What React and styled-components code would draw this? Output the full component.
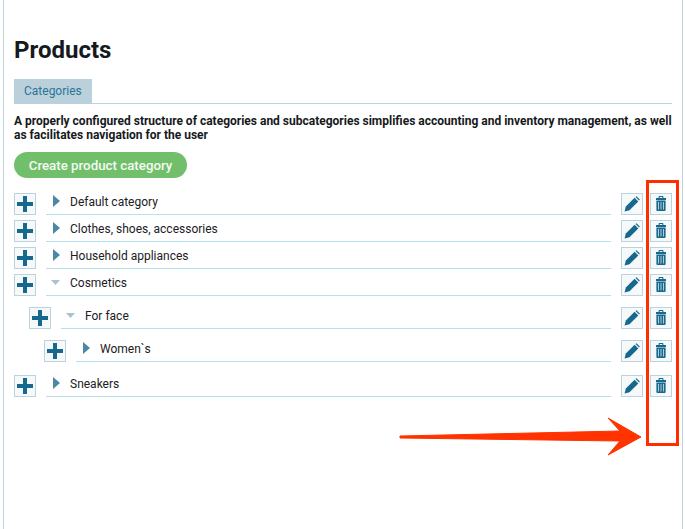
import React from "react";
import styled, { createGlobalStyle } from "styled-components";

const Global = createGlobalStyle`
  html, body { margin: 0; padding: 0; background: #fff; }
  body { font-family: Roboto, "Liberation Sans", sans-serif; overflow: hidden; }
`;

const Panel = styled.main`
  position: relative;
  box-sizing: border-box;
  width: 680px;
  height: 529px;
  margin-left: 3px;
  border-left: 1px solid #bcd2dc;
  border-right: 1px solid #bcd2dc;
  padding: 36px 10px 0 10px;
`;
const Title = styled.h1`
  margin: 0;
  font-size: 24px;
  line-height: 28px;
  font-weight: 700;
  color: #141a1e;
`;
const Tabs = styled.div`
  display: flex;
  margin-top: 15px;
  border-bottom: 1px solid #bcd2dc;
`;
const Tab = styled.div`
  height: 24px;
  line-height: 24px;
  padding: 0 10px;
  font-size: 12px;
  color: #2b7596;
  background: #bad1dc;
`;
const Description = styled.p`
  margin: 10px 0 0;
  font-size: 12px;
  line-height: 14px;
  font-weight: 700;
  color: #16191c;
`;
const CreateButton = styled.button`
  display: block;
  margin-top: 10px;
  width: 173px;
  height: 26px;
  border: 0;
  border-radius: 13px;
  padding: 0;
  background: #72bf6b;
  color: #f4faf3;
  font: 500 13.3px Roboto, sans-serif;
`;
const Tree = styled.div`
  margin-top: 15px;
`;
const Row = styled.div`
  display: flex;
  align-items: flex-start;
  height: 22px;
  margin-bottom: 5px;
`;
const Children = styled.div`
  padding: 6px 0 4px 15px;
`;
const IconButton = styled.span`
  box-sizing: border-box;
  flex: none;
  display: flex;
  align-items: center;
  justify-content: center;
  width: 22px;
  height: 22px;
  border: 1px solid #bcd2dc;
  background: #f5f9fa;
  color: #17688d;
`;
const Label = styled.div`
  box-sizing: border-box;
  flex: 1;
  display: flex;
  align-items: center;
  height: 22px;
  margin: 0 10px;
  border-bottom: 1px solid #b5e2f2;
  font-size: 12px;
  color: #1c2024;
  padding-bottom: 3px;
`;
const CaretSlot = styled.span`
  flex: none;
  display: flex;
  align-items: center;
  justify-content: flex-start;
  box-sizing: border-box;
  width: 24px;
  padding-left: ${(p) => (p.$open ? 5 : 6)}px;
  margin-bottom: 2px;
`;
const Actions = styled.div`
  display: flex;
  gap: 7px;
`;
const TrashIcon = styled.svg`
  margin-bottom: 2px;
`;
const Annotation = styled.svg`
  position: absolute;
  left: -4px;
  top: 0;
  width: 685px;
  height: 529px;
  pointer-events: none;
`;

const Plus = () => (
  <svg width="18" height="18" viewBox="0 0 18 18" fill="currentColor">
    <path d="M7 1h4v6h6v4h-6v6H7v-6H1V7h6z" />
  </svg>
);
const Pencil = () => (
  <svg width="16" height="16" viewBox="0 0 16 16" fill="currentColor">
    <path d="M0.6 15.4l1.2-4.9L10.6 1.7l3.7 3.7-8.8 8.8z" />
    <path d="M11.5 0.9l1-0.7 3.3 3.3-0.7 1z" />
  </svg>
);
const Trash = () => (
  <TrashIcon width="10" height="15" viewBox="0 0 10 15" fill="currentColor">
    <path fillRule="evenodd" d="M2.6 2V0.8Q2.6 0 3.4 0h3.2q0.8 0 0.8 0.8V2H10v2H0V2zM3.7 2h2.6V1H3.7z" />
    <path fillRule="evenodd" d="M0.4 4.6h9.2V14a1 1 0 0 1-1 1H1.4a1 1 0 0 1-1-1zM2.2 6v7.6h0.7V6zM4.65 6v7.6h0.7V6zM7.1 6v7.6h0.7V6z" />
  </TrashIcon>
);
const Caret = ({ open }) =>
  open ? (
    <svg width="9" height="5" viewBox="0 0 9 5"><path d="M0 0h9L4.5 5z" fill="#a9c3cf" /></svg>
  ) : (
    <svg width="8" height="12" viewBox="0 0 8 12"><path d="M1 0l7 6-7 6z" fill="#4c87a6" /></svg>
  );

const Node = ({ name, open, children }) => (
  <>
    <Row>
      <IconButton><Plus /></IconButton>
      <Label>
        <CaretSlot $open={open}><Caret open={open} /></CaretSlot>
        {name}
      </Label>
      <Actions>
        <IconButton><Pencil /></IconButton>
        <IconButton><Trash /></IconButton>
      </Actions>
    </Row>
    {children && <Children>{children}</Children>}
  </>
);

export default function App() {
  return (
    <>
      <Global />
      <Panel>
        <Title>Products</Title>
        <Tabs><Tab>Categories</Tab></Tabs>
        <Description>
          A properly configured structure of categories and subcategories simplifies accounting and inventory management, as well as facilitates navigation for the user
        </Description>
        <CreateButton>Create product category</CreateButton>
        <Tree>
          <Node name="Default category" />
          <Node name="Clothes, shoes, accessories" />
          <Node name="Household appliances" />
          <Node name="Cosmetics" open>
            <Node name="For face" open>
              <Node name="Women`s" />
            </Node>
          </Node>
          <Node name="Sneakers" />
        </Tree>
        <Annotation viewBox="0 0 685 529">
          <rect x="647.5" y="181.5" width="30" height="263" fill="none" stroke="#ff2e00" strokeWidth="3" />
          <path d="M400 436 L620 431 L608 418 L641 437 L608 455 L620 441 L400 438 Z" fill="#ff3300" stroke="#ff3300" strokeWidth="1" strokeLinejoin="round" />
        </Annotation>
      </Panel>
    </>
  );
}
